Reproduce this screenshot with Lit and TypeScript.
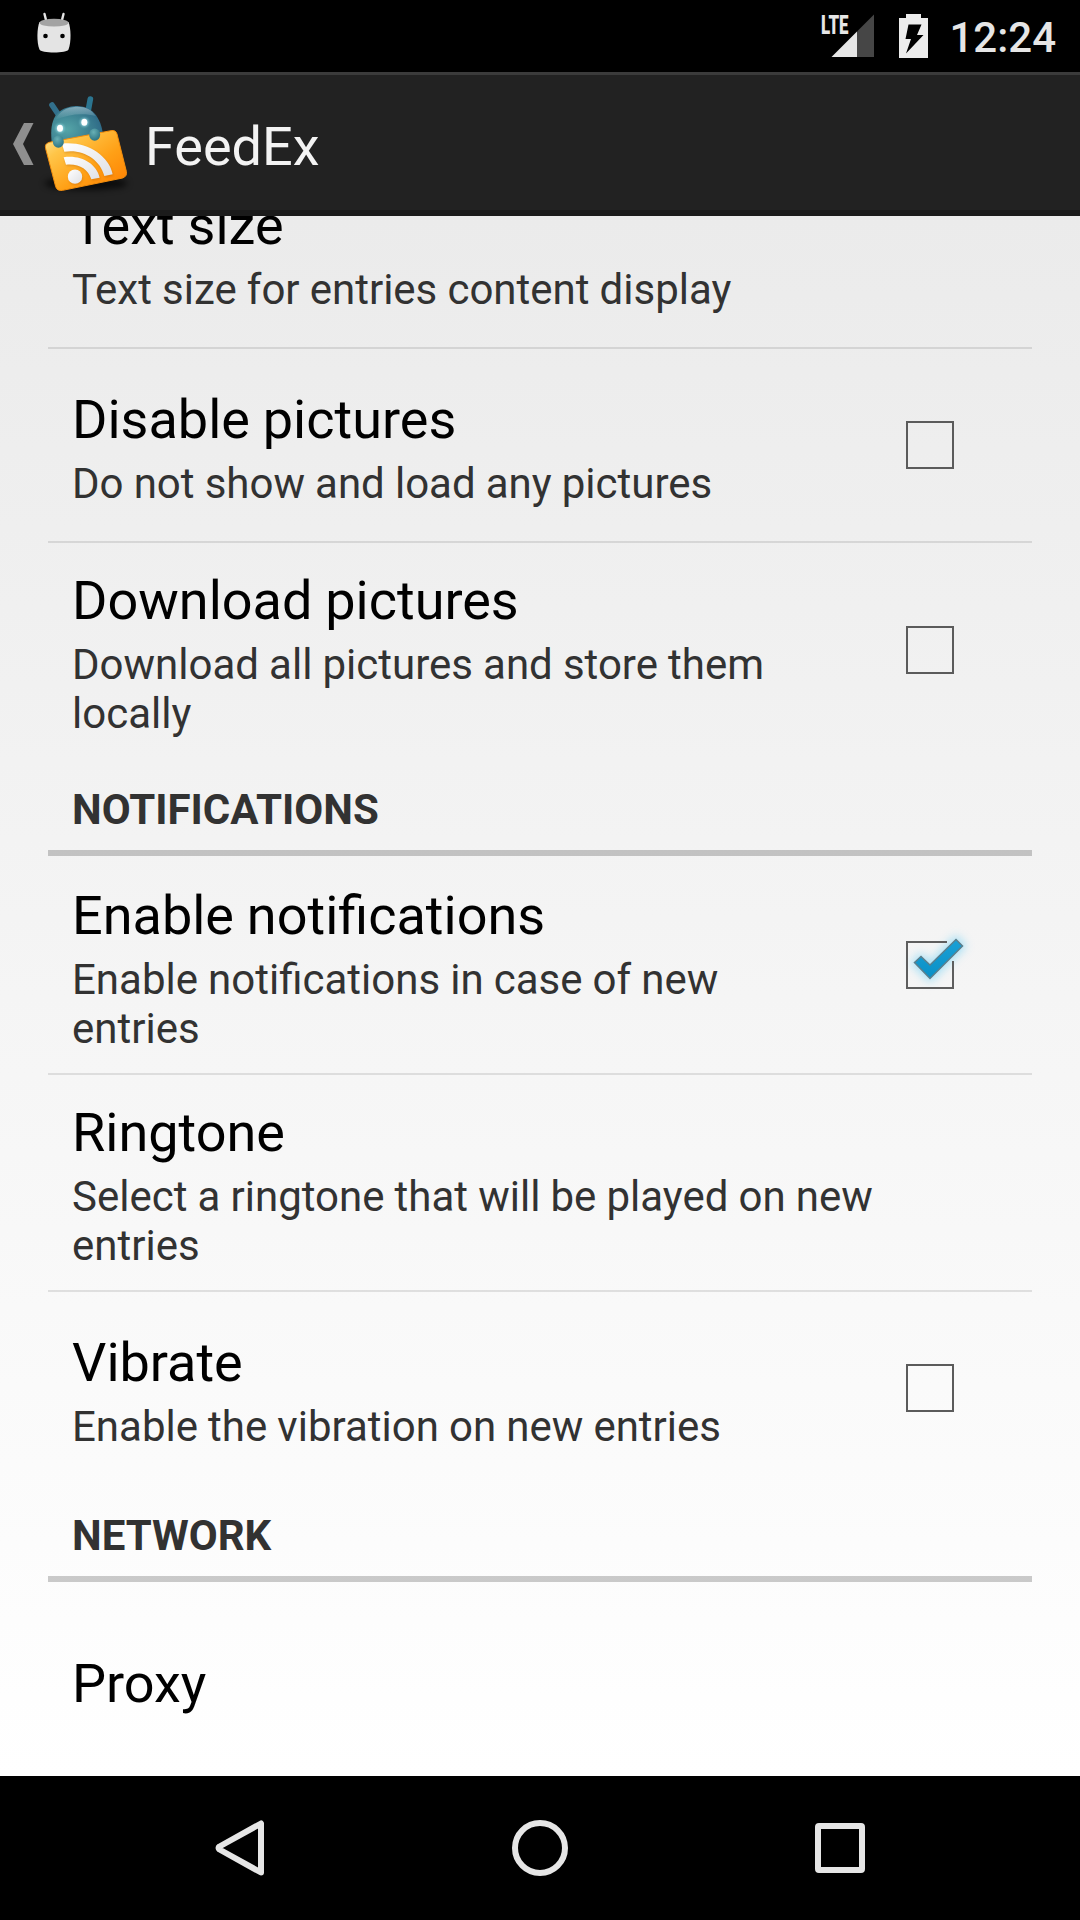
import { LitElement, html, css, svg, nothing } from "lit";
import { customElement, property } from "lit/decorators.js";

@customElement("check-box")
class CheckBox extends LitElement {
  @property({ type: Boolean }) checked = false;
  static styles = css`
    :host { display: block; width: 96px; height: 96px; flex: none; margin-top: -1px; }
    svg { display: block; }
  `;
  render() {
    return html`<svg width="96" height="96" viewBox="0 0 96 96">
      ${this.checked
        ? svg`<defs>
            <filter id="glow" x="-50%" y="-50%" width="200%" height="200%"><feGaussianBlur stdDeviation="5"/></filter>
            <linearGradient id="tick" x1="0" y1="0" x2="0" y2="1"><stop offset="0" stop-color="#1ba0d6"/><stop offset="1" stop-color="#0a90c6"/></linearGradient>
          </defs>
          <path d="M32 46 L39 39 L48 48.500 L74 21.500 L81 29 L48 62Z" fill="#6fd0f5" stroke="#6fd0f5" stroke-width="5" opacity=".6" filter="url(#glow)"/>
          <path d="M65 25H25V71H71V44" fill="none" stroke="#5e5e5e" stroke-width="2"/>
          <path d="M32.500 45.500 L39 39.500 L48 48 L74 22.500 L80.500 29 L48 61.500Z" fill="url(#tick)" stroke="#5b7f8d" stroke-width="1.500"/>`
        : svg`<rect x="25" y="25" width="46" height="46" fill="none" stroke="#5b5b5b" stroke-width="2"/>`}
    </svg>`;
  }
}

@customElement("pref-row")
class PrefRow extends LitElement {
  @property() name = "";
  @property() summary = "";
  @property() check = "";
  static styles = css`
    :host { display: flex; align-items: center; box-sizing: border-box; min-height: 192px; padding: 18px 54px 18px 24px; }
    .text { flex: 1; min-width: 0; padding-right: 6px; }
    .text.narrow { padding-right: 48px; }
    .title { font-size: 54px; line-height: 64px; padding: 8px 0 1px; color: #000; word-spacing: -0.5px; }
    .summary { font-size: 42px; line-height: 49px; padding: 6px 0 2px; color: #323232; word-spacing: -0.3px; }
  `;
  render() {
    return html`
      <div class="text ${this.check ? "narrow" : ""}">
        <div class="title">${this.name}</div>
        ${this.summary ? html`<div class="summary">${this.summary}</div>` : nothing}
      </div>
      ${this.check ? html`<check-box ?checked=${this.check === "on"}></check-box>` : nothing}
    `;
  }
}

type Entry = { header?: string; name?: string; summary?: string; check?: string };

const ENTRIES: Entry[] = [
  { name: "Text size", summary: "Text size for entries content display" },
  { name: "Disable pictures", summary: "Do not show and load any pictures", check: "off" },
  { name: "Download pictures", summary: "Download all pictures and store them locally", check: "off" },
  { header: "NOTIFICATIONS" },
  { name: "Enable notifications", summary: "Enable notifications in case of new entries", check: "on" },
  { name: "Ringtone", summary: "Select a ringtone that will be played on new entries" },
  { name: "Vibrate", summary: "Enable the vibration on new entries", check: "off" },
  { header: "NETWORK" },
  { name: "Proxy" },
];

@customElement("app-root")
class AppRoot extends LitElement {
  static styles = css`
    :host { display: flex; flex-direction: column; width: 1080px; height: 1920px; overflow: hidden; font-family: Roboto, sans-serif; background: #000; }
    svg { display: block; flex: none; }
    .status { height: 72px; flex: none; display: flex; align-items: center; justify-content: space-between; padding: 0 24px 0 36px; }
    .right { display: flex; align-items: center; }
    .battery { margin-left: 24px; }
    .time { margin-left: 21px; font-size: 42px; line-height: 49px; font-weight: 500; color: #e6e6e6; padding-top: 3px; }
    .bar { height: 144px; box-sizing: border-box; flex: none; display: flex; align-items: center; background: #222; border-top: 3px solid #3b3b3b; border-bottom: 6px solid #1b1b1b; }
    .app-title { font-size: 54px; line-height: 64px; color: #f3f3f3; padding: 8px 0 0 1px; }
    .list { flex: 1; min-height: 0; overflow: hidden; display: flex; flex-direction: column; justify-content: flex-end; padding: 0 48px; background: linear-gradient(#ebebeb, #fff); }
    .list > * { flex: none; }
    .sep { height: 2px; background: rgba(0, 0, 0, 0.1); }
    .gap { height: 2px; }
    .header { font-size: 42px; line-height: 49px; font-weight: 700; color: #323232; padding: 27px 24px 16px; border-bottom: 6px solid rgba(0, 0, 0, 0.2); }
    .nav { height: 144px; flex: none; }
  `;

  private entries() {
    return ENTRIES.map((e, i) => {
      if (e.header) return html`<div class="header">${e.header}</div><div class="gap"></div>`;
      const next = ENTRIES[i + 1];
      return html`<pref-row .name=${e.name!} .summary=${e.summary ?? ""} .check=${e.check ?? ""}></pref-row>
        ${next && !next.header ? html`<div class="sep"></div>` : nothing}`;
    });
  }

  render() {
    return html`
      <div class="status">
        <svg width="36" height="72" viewBox="36 0 36 72">
          <path d="M44.500 14 L46.500 22 M63.500 14 L61.500 22" stroke="#e4e4e4" stroke-width="2.400" stroke-linecap="round"/>
          <path d="M39.500 22 C37 28 36.500 42 39.500 49.500 C40.500 53.500 67.500 53.500 68.500 49.500 C71.500 42 71 28 68.500 22Z" fill="#e4e4e4"/>
          <ellipse cx="54" cy="22.700" rx="14.500" ry="3.900" fill="#a3a3a3"/>
          <circle cx="45.500" cy="36" r="2.300" fill="#000"/><circle cx="62.500" cy="36" r="2.300" fill="#000"/>
        </svg>
        <div class="right">
          <svg width="54" height="72" viewBox="821 0 54 72">
            <text x="821" y="33.500" font-size="26" font-weight="900" fill="#e6e6e6" textLength="27.500" lengthAdjust="spacingAndGlyphs">LTE</text>
            <path d="M857 31.500 L874 14.500 V57 H857Z" fill="#464646"/>
            <path d="M831.500 57 L857 31.500 V57Z" fill="#e6e6e6"/>
          </svg>
          <svg class="battery" width="29" height="72" viewBox="899 0 29 72">
            <path d="M906 14H921V18H928V58H899V18H906Z" fill="#ececec"/>
            <path d="M908.500 24.500H921.500L917 35H923.500L906 53.500L911 39H905.500Z" fill="#000"/>
          </svg>
          <div class="time">12:24</div>
        </div>
      </div>
      <div class="bar">
        <svg width="144" height="135" viewBox="0 75 144 135">
          <path d="M24 123H33.500L23 144L33.500 165H24L13 144Z" fill="#8f8f8f"/>
          <defs>
            <linearGradient id="card" x1="0" y1="0" x2="1" y2="1"><stop offset="0" stop-color="#ffe9a0"/><stop offset=".25" stop-color="#ffc548"/><stop offset=".6" stop-color="#ffa016"/><stop offset="1" stop-color="#ff7d00"/></linearGradient>
            <radialGradient id="head" cx=".3" cy=".6" r=".75"><stop offset="0" stop-color="#55a5a8"/><stop offset=".5" stop-color="#3f8594"/><stop offset="1" stop-color="#2b6484"/></radialGradient>
            <linearGradient id="shine" x1="0" y1="0" x2="0" y2="1"><stop offset="0" stop-color="#b9d4dc" stop-opacity=".6"/><stop offset="1" stop-color="#b9d4dc" stop-opacity="0"/></linearGradient>
            <radialGradient id="hand" cx=".4" cy=".3" r=".7"><stop offset="0" stop-color="#68b0b5"/><stop offset="1" stop-color="#2d7484"/></radialGradient>
            <linearGradient id="wave" x1="0" y1="0" x2="1" y2="1"><stop offset="0" stop-color="#fff"/><stop offset="1" stop-color="#dfe0e4"/></linearGradient>
            <filter id="soft" x="-30%" y="-100%" width="160%" height="300%"><feGaussianBlur stdDeviation="9"/></filter>
            <filter id="eye" x="-100%" y="-100%" width="300%" height="300%"><feGaussianBlur stdDeviation="3"/></filter>
          </defs>
          <g transform="translate(30 70) scale(.33333)">
            <ellipse cx="168" cy="340" rx="125" ry="20" fill="#000" opacity=".65" filter="url(#soft)"/>
            <path d="M66 105 L84 132" stroke="#32708c" stroke-width="17" stroke-linecap="round"/>
            <path d="M181 87 L175 120" stroke="#2b7590" stroke-width="17" stroke-linecap="round"/>
            <path d="M66 225 C58 160 68 115 135 108 C190 104 217 150 220 205Z" fill="url(#head)"/>
            <path d="M76 150 C88 122 110 112 138 110 C165 109 185 118 197 138 C160 128 115 132 76 150Z" fill="url(#shine)"/>
            <circle cx="90" cy="175" r="13" fill="#9be0ea" opacity=".7" filter="url(#eye)"/><circle cx="163" cy="157" r="13" fill="#9be0ea" opacity=".7" filter="url(#eye)"/>
            <ellipse cx="90" cy="175" rx="9" ry="10.500" fill="#fff"/><ellipse cx="163" cy="157" rx="9" ry="10.500" fill="#fff"/>
            <path d="M58 217 L243 182 Q257 179 261 192 L289 304 Q292 319 278 324 L98 361 Q82 364 77 350 L47 236 Q43 221 58 217Z" fill="url(#card)" stroke="#f48e0c" stroke-width="3"/>
            <g opacity=".3" fill="#a04a00" transform="translate(2 4)" filter="url(#eye)">
              <path d="M96 221 C165 212 237 254 248 313 L223 318 C210 267 158 236 103 245Z"/>
              <path d="M101 262 C152 254 199 280 209 323 L184 328 C174 296 146 280 108 284Z"/>
              <circle cx="135" cy="320" r="21"/>
            </g>
            <path d="M96 221 C165 212 237 254 248 313 L223 318 C210 267 158 236 103 245Z" fill="url(#wave)"/>
            <path d="M101 262 C152 254 199 280 209 323 L184 328 C174 296 146 280 108 284Z" fill="url(#wave)"/>
            <circle cx="135" cy="320" r="21.500" fill="url(#wave)"/>
            <ellipse cx="85" cy="215" rx="16.500" ry="18.500" fill="url(#hand)"/>
            <ellipse cx="194" cy="194" rx="16.500" ry="18.500" fill="url(#hand)"/>
          </g>
        </svg>
        <div class="app-title">FeedEx</div>
      </div>
      <div class="list">${this.entries()}</div>
      <svg class="nav" width="1080" height="144" viewBox="0 1776 1080 144" fill="none" stroke="#e6e6e6" stroke-width="6" stroke-linejoin="round">
        <path d="M261 1823.500 V1872.500 L219.500 1849.500 Q217.500 1848 219.500 1846.500Z"/>
        <circle cx="540" cy="1848" r="25"/>
        <rect x="818" y="1826" width="44" height="44" rx="1"/>
      </svg>
    `;
  }
}
